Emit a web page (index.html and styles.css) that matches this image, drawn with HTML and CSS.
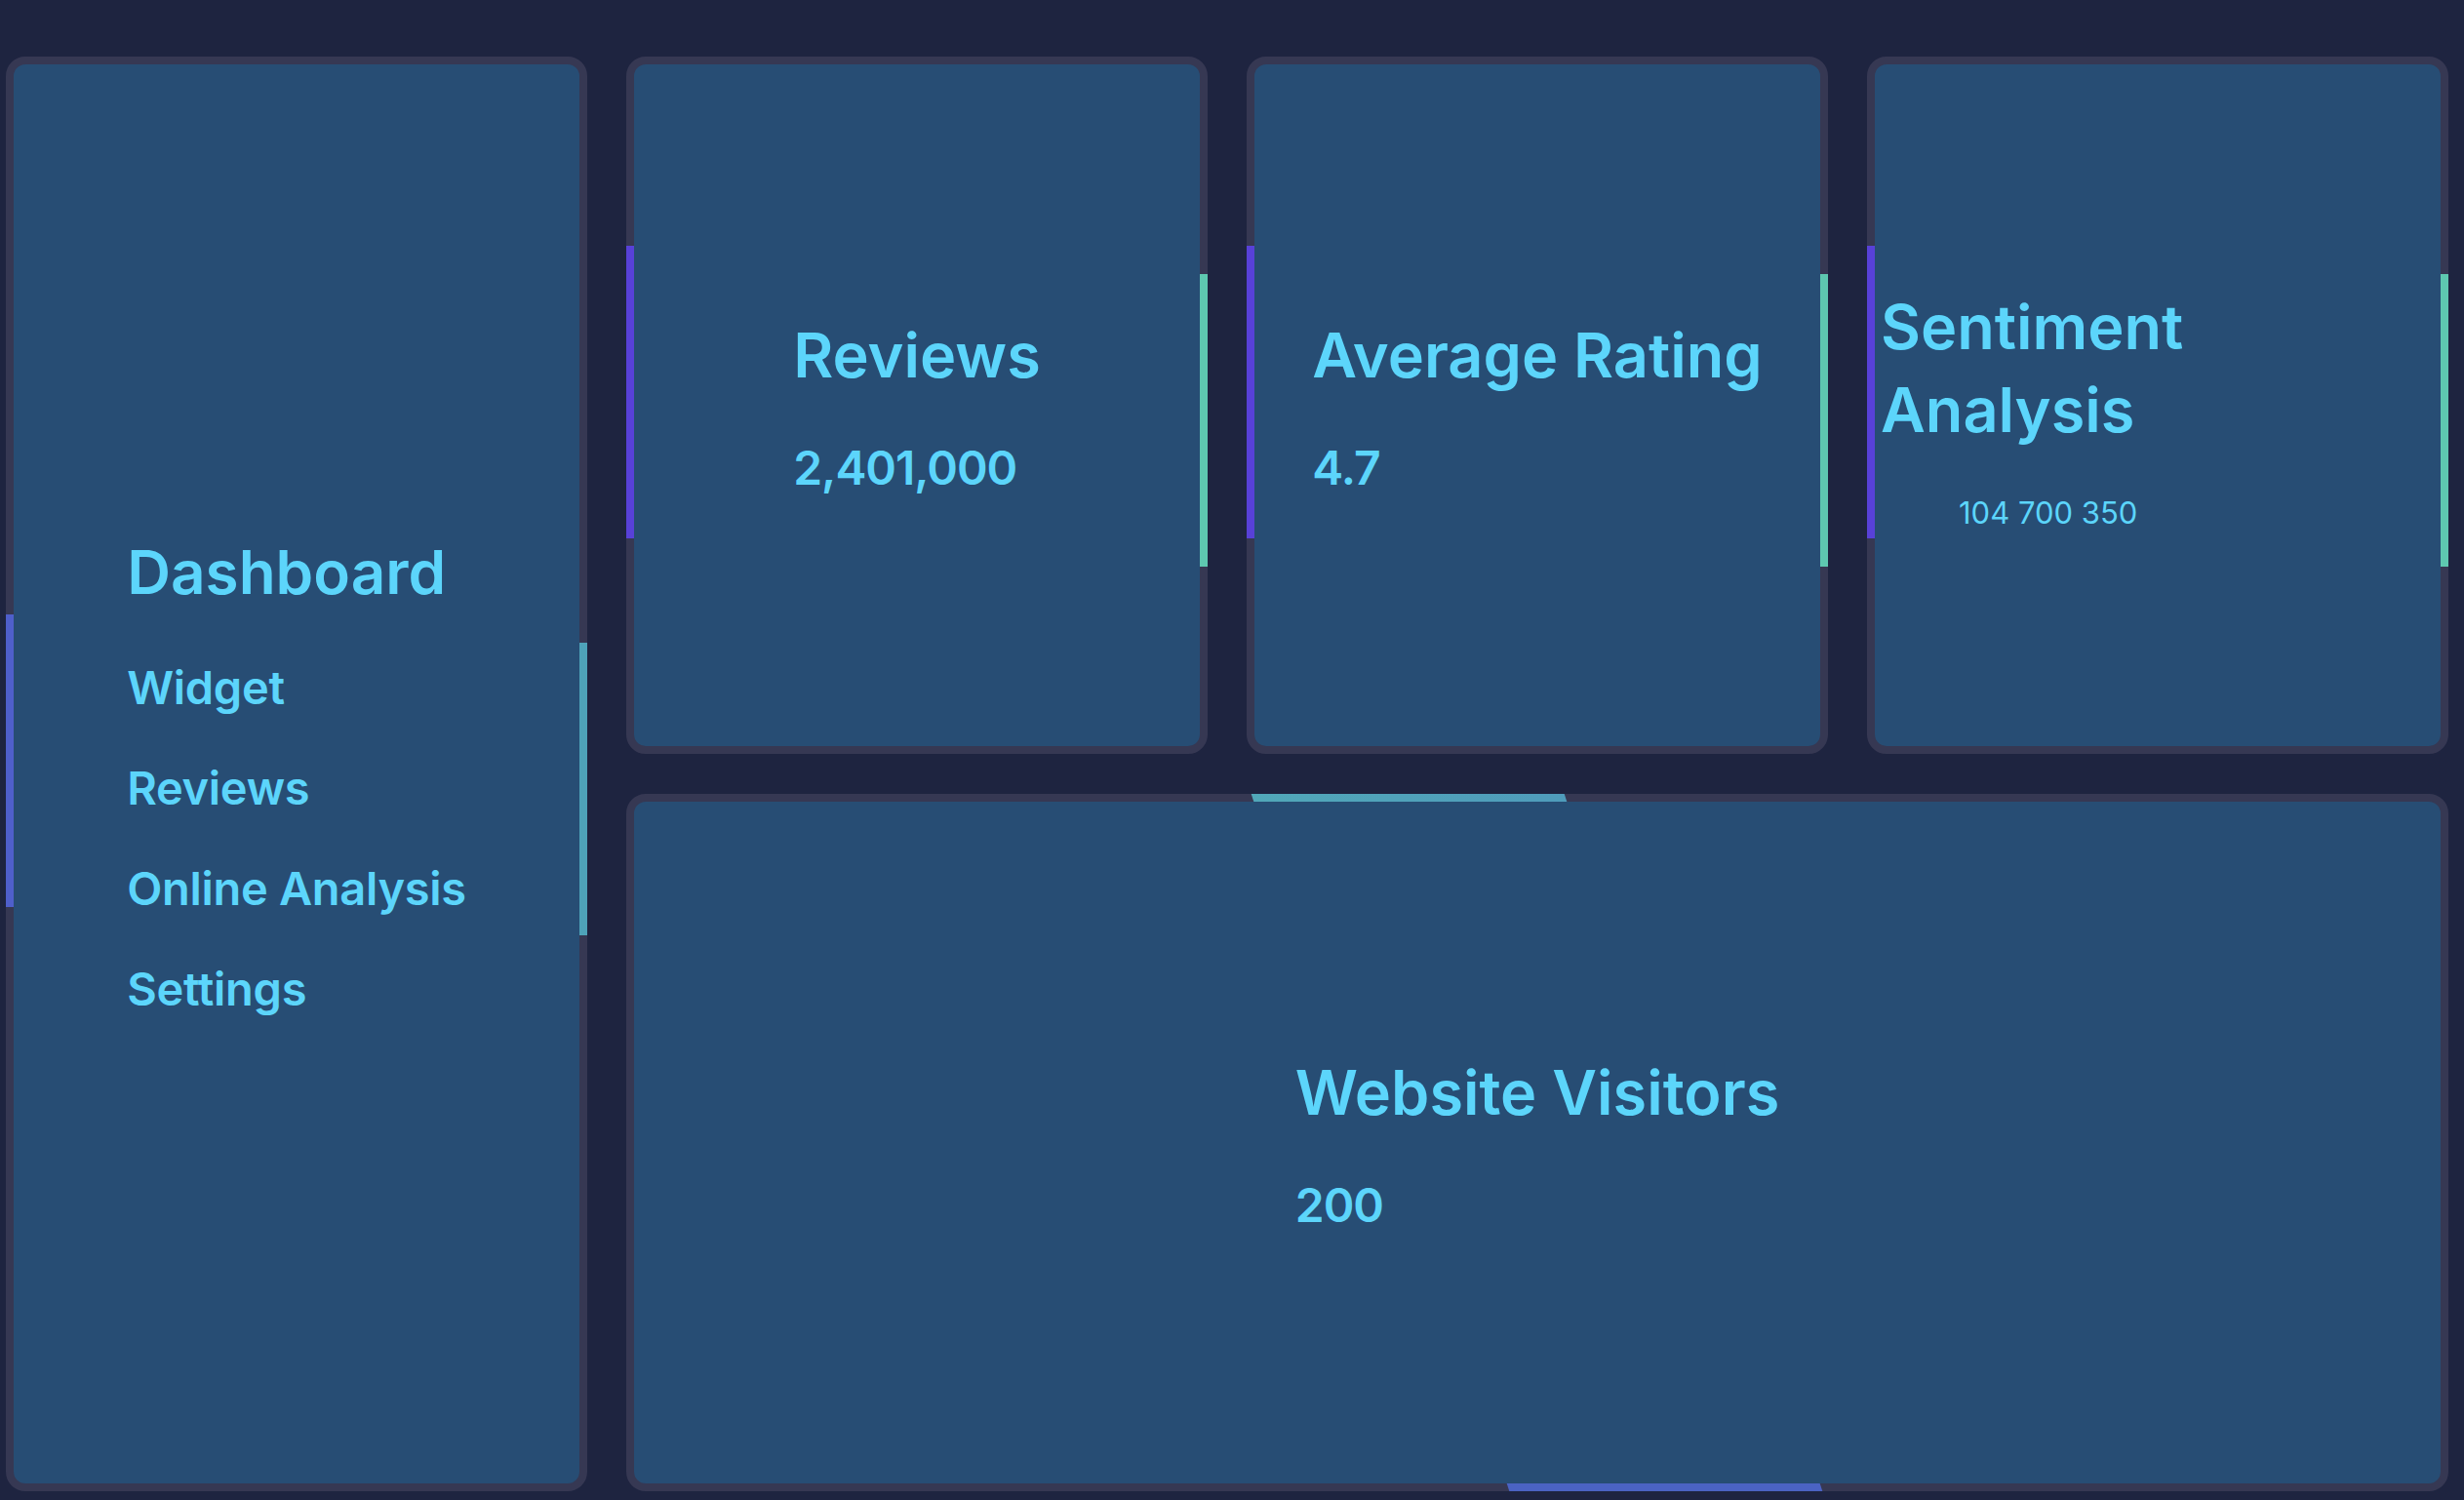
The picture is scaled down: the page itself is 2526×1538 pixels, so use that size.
FILE: index.html
```html
<!DOCTYPE html>
<html lang="en">
<head>
    <meta charset="UTF-8">
    <meta name="viewport" content="width=device-width, initial-scale=1.0">
    <title>Dashboard</title>
    <link rel="stylesheet" href="styles.css">
</head>
<body>
    <div class="dashboard">
        <nav class="panel sidebar">
            <div class="content menu">
                <h1>Dashboard</h1>
                <ul>
                    <li>Widget</li>
                    <li>Reviews</li>
                    <li>Online Analysis</li>
                    <li>Settings</li>
                </ul>
            </div>
        </nav>

        <div class="panel card">
            <div class="content">
                <h2>Reviews</h2>
                <p class="value">2,401,000</p>
            </div>
        </div>

        <div class="panel card">
            <div class="content">
                <h2>Average Rating</h2>
                <p class="value">4.7</p>
            </div>
        </div>

        <div class="panel card sentiment">
            <div class="content">
                <h2>Sentiment Analysis</h2>
                <p class="value small">104 700 350</p>
            </div>
        </div>

        <div class="panel wide">
            <div class="content">
                <h2>Website Visitors</h2>
                <p class="value">200</p>
            </div>
        </div>
    </div>
</body>
</html>
```

FILE: styles.css
```css
body {
    margin: 0;
    background-color: #1e2440;
    color: #5cd5fb;
    font-family: "Inter", "Noto Sans", sans-serif;
}

.dashboard {
    box-sizing: border-box;
    height: 100vh;
    padding: 58px 16px 9px 6px;
    display: grid;
    grid-template-columns: repeat(4, 1fr);
    grid-template-rows: 1fr 1fr;
    column-gap: 40px;
    row-gap: 41px;
}

.panel {
    position: relative;
    box-sizing: border-box;
    background-color: #274d74;
    border: 8px solid #363853;
    border-radius: 20px;
    display: flex;
    align-items: center;
    justify-content: center;
    min-width: 0;
}

/* accent strips sitting on the borders */
.sidebar::before,
.sidebar::after,
.card::before,
.card::after {
    content: "";
    position: absolute;
    width: 8px;
    height: 300px;
}

.sidebar::before,
.card::before {
    left: -8px;
    top: calc(50% - 164px);
}

.sidebar::after,
.card::after {
    right: -8px;
    top: calc(50% - 135px);
}

.sidebar::before { background-color: #4f5fcb; }
.sidebar::after { background-color: #4ea3b9; }
.card::before { background-color: #5841d8; }
.card::after { background-color: #5ec8b0; }

.wide::before,
.wide::after {
    content: "";
    position: absolute;
    width: 321px;
    height: 8px;
    transform: skewX(18deg);
}

.wide::before {
    top: -8px;
    left: calc(50% - 292px);
    background: linear-gradient(90deg, #51a8b9, #4f9cbb);
}

.wide::after {
    bottom: -8px;
    left: calc(50% - 30px);
    background-color: #4b63c3;
}

.sidebar {
    grid-row: 1 / 3;
}

.wide {
    grid-column: 2 / 5;
}

.content {
    min-width: 0;
}

.card .content,
.wide .content {
    padding: 0 6px;
}

.sentiment .content {
    padding-top: 8px;
}

h1 {
    margin: 0 0 26px;
    font-size: 62px;
    line-height: 80px;
    font-weight: 600;
}

.menu {
    padding-top: 24px;
}

.menu ul {
    list-style: none;
    margin: 0;
    padding: 0;
}

.menu li {
    font-size: 47px;
    line-height: 103px;
    font-weight: 600;
    letter-spacing: -0.3px;
}

h2 {
    margin: 0;
    font-size: 63px;
    line-height: 85px;
    font-weight: 600;
}

.value {
    margin: 43px 0 0;
    font-size: 48px;
    line-height: 60px;
    font-weight: 600;
    letter-spacing: -1px;
}

.value.small {
    margin-left: 80px;
    font-size: 31px;
    line-height: 40px;
    font-weight: 400;
    letter-spacing: 0;
}
```
